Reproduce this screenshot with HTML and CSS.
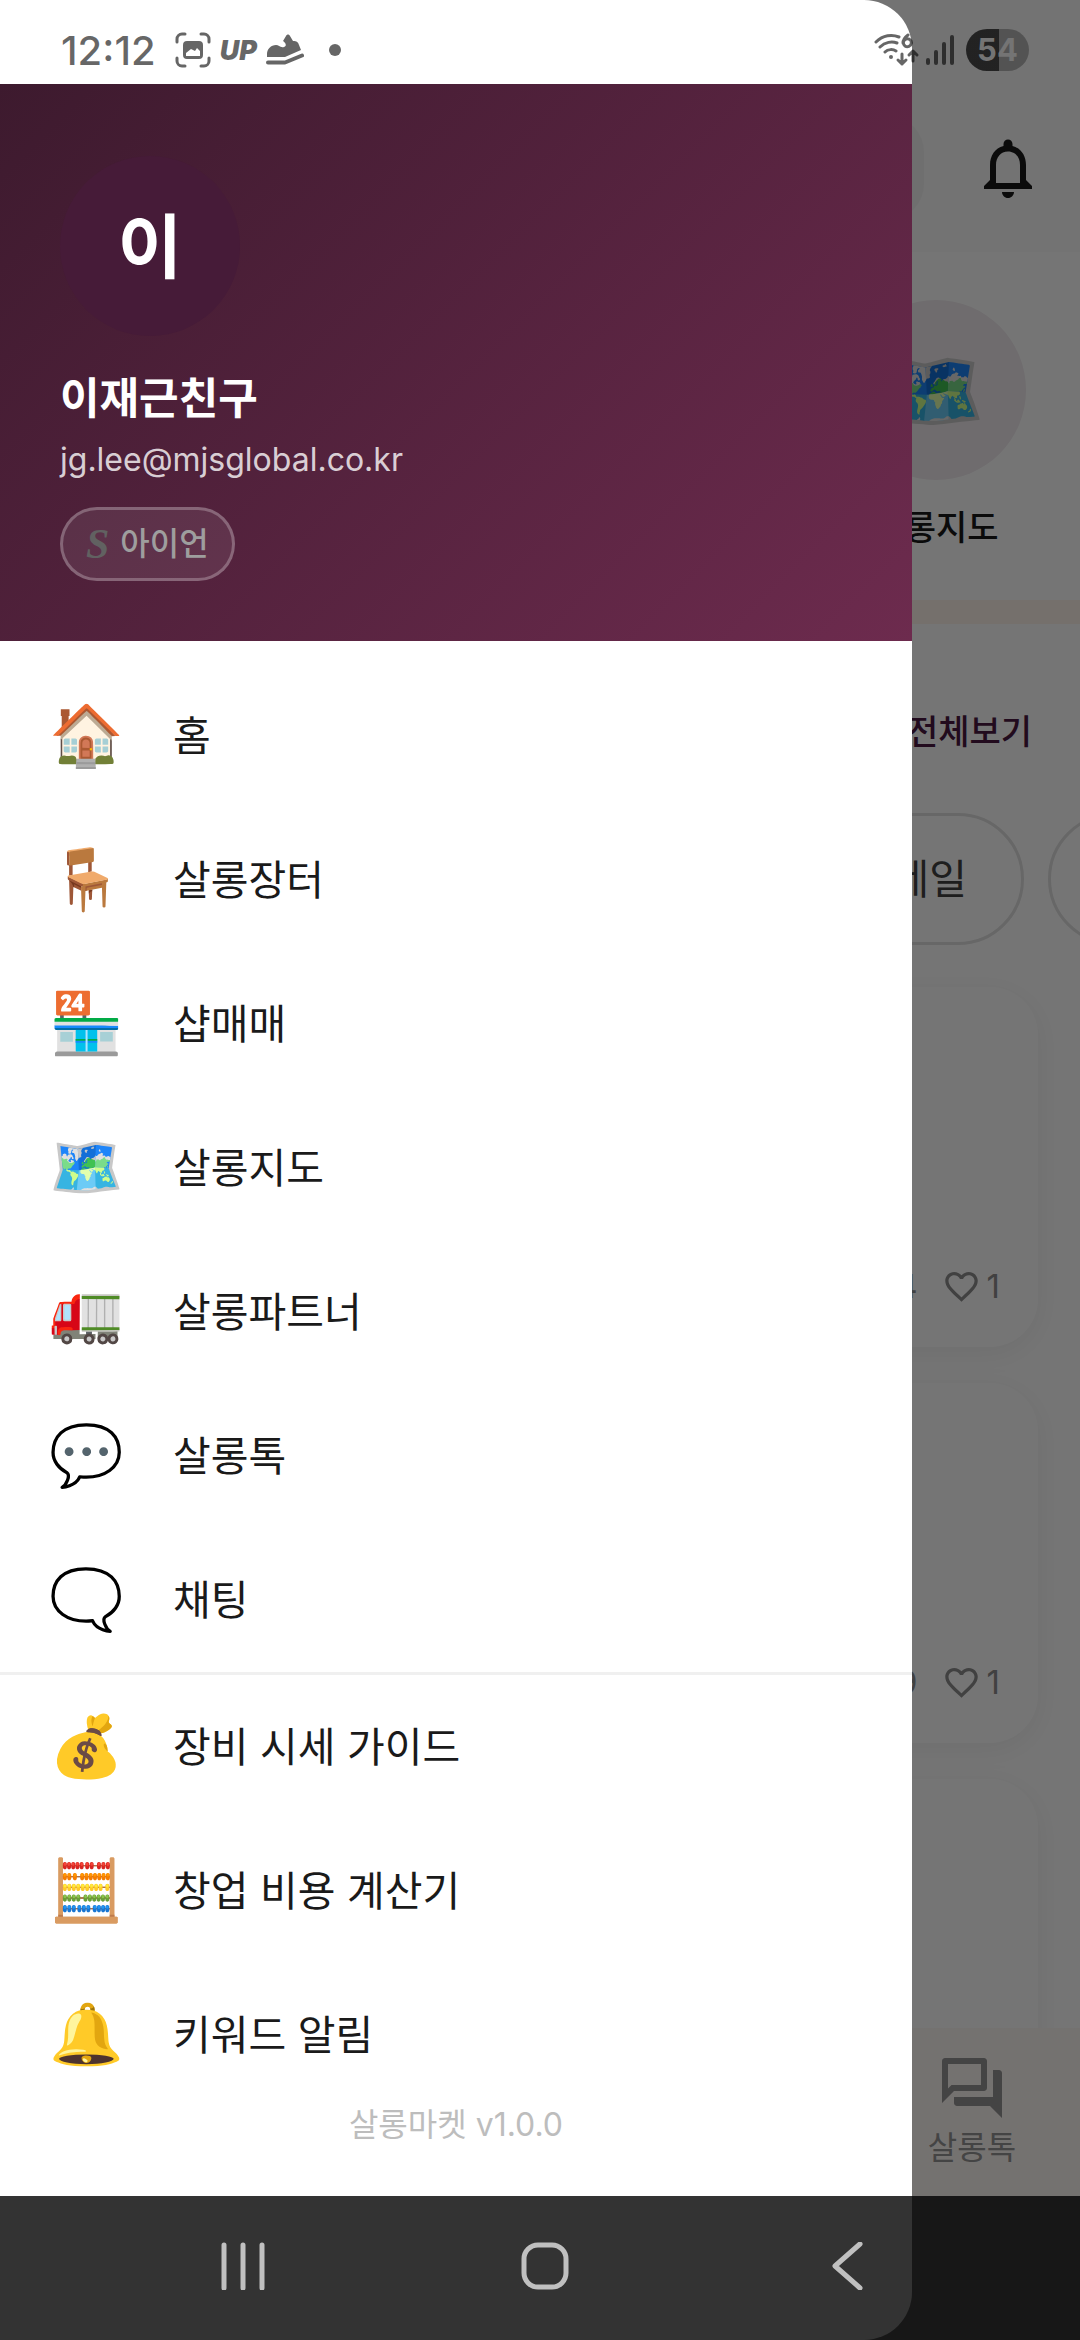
FILE: index.html
```html
<!DOCTYPE html>
<html lang="ko">
<head>
    <meta charset="UTF-8">
    <meta name="viewport" content="width=device-width, initial-scale=1">
    <title>살롱마켓</title>
    <link rel="stylesheet" href="styles.css">
</head>
<body>

    <!-- 앱 화면 -->
    <div class="app">
        <header class="appbar">
            <div class="search"></div>
            <button class="icon-btn" type="button" aria-label="알림">
                <svg viewBox="0 0 24 24" width="72" height="72"><path fill="currentColor" d="M12 22c1.100 0 2-.9 2-2h-4c0 1.100.9 2 2 2zm6-6v-5c0-3.070-1.630-5.640-4.500-6.320V4c0-.83-.67-1.500-1.500-1.500s-1.500.67-1.500 1.500v.68C7.640 5.360 6 7.920 6 11v5l-2 2v1h16v-1l-2-2zm-2 1H8v-6c0-2.480 1.510-4.500 4-4.500s4 2.020 4 4.500v6z"/></svg>
            </button>
        </header>

        <main class="content">
            <section class="shortcuts">
                <a class="shortcut" href="#map">
                    <span class="shortcut-icon">🗺️</span>
                    <span>살롱지도</span>
                </a>
            </section>
            <div class="more"><a href="#all">전체보기</a></div>
            <div class="chips">
                <button class="chip" type="button">네일</button>
                <button class="chip chip-next" type="button" aria-label="다음"></button>
            </div>
            <div class="cards">
                <article class="card">
                    <span>4</span>
                    <svg viewBox="0 0 24 24"><use href="#heart"/></svg>
                    <span>1</span>
                </article>
                <article class="card">
                    <span>9</span>
                    <svg viewBox="0 0 24 24"><use href="#heart"/></svg>
                    <span>1</span>
                </article>
                <article class="card"></article>
            </div>
        </main>

        <nav class="tabbar">
            <a class="tab" href="#talk">
                <svg viewBox="0 0 24 24" width="72" height="72"><path fill="currentColor" d="M15 4v7H5.170L4 12.170V4h11m1-2H3c-.55 0-1 .45-1 1v14l4-4h10c.55 0 1-.45 1-1V3c0-.55-.45-1-1-1zm5 4h-2v9H6v2c0 .55.45 1 1 1h11l4 4V7c0-.55-.45-1-1-1z"/></svg>
                <span>살롱톡</span>
            </a>
        </nav>
    </div>

    <div class="scrim"></div>

    <!-- 사이드 메뉴 -->
    <aside class="drawer">
        <header class="profile">
            <div class="avatar">이</div>
            <h1 class="name">이재근친구</h1>
            <p class="email">jg.lee@mjsglobal.co.kr</p>
            <span class="grade"><i>S</i>아이언</span>
        </header>
        <ul class="menu">
            <li><a href="#home"><span class="ico">🏠</span>홈</a></li>
            <li><a href="#market"><span class="ico">🪑</span>살롱장터</a></li>
            <li><a href="#shop"><span class="ico">🏪</span>샵매매</a></li>
            <li><a href="#map"><span class="ico">🗺️</span>살롱지도</a></li>
            <li><a href="#partner"><span class="ico">🚛</span>살롱파트너</a></li>
            <li><a href="#talk"><span class="ico">💬</span>살롱톡</a></li>
            <li><a href="#chat"><span class="ico">🗨️</span>채팅</a></li>
        </ul>
        <ul class="menu tools">
            <li><a href="#price"><span class="ico">💰</span>장비 시세 가이드</a></li>
            <li><a href="#cost"><span class="ico">🧮</span>창업 비용 계산기</a></li>
            <li><a href="#keyword"><span class="ico">🔔</span>키워드 알림</a></li>
        </ul>
        <p class="version">살롱마켓 v1.0.0</p>
    </aside>

    <!-- 상태 표시줄 -->
    <div class="statusbar">
        <span class="time">12:12</span>
        <svg class="st-shot" viewBox="0 0 36 36" width="36" height="36">
            <path d="M2 10V7a5 5 0 0 1 5-5h3M26 2h3a5 5 0 0 1 5 5v3M34 26v3a5 5 0 0 1-5 5h-3M10 34H7a5 5 0 0 1-5-5v-3" fill="none" stroke="currentColor" stroke-width="3" stroke-linecap="round"/>
            <path fill="currentColor" fill-rule="evenodd" d="M12 9h12a4 4 0 0 1 4 4v10a4 4 0 0 1-4 4H12a4 4 0 0 1-4-4V13a4 4 0 0 1 4-4zm-1 12v3h14v-5l-3-3-2 3-4-2z"/>
        </svg>
        <span class="st-up">UP</span>
        <svg class="st-shoe" viewBox="0 0 38 32" width="38" height="32">
            <path fill="currentColor" d="M1 23v-3c0-5 4-9 9-9 3 0 4 3 8 2 3-1 2-4-1-6l3-5c1-2 3-2 4 0l3 5c4 0 5 1 6 4l2 5-16 7z"/>
            <path d="M2 28.500h17l17-7" fill="none" stroke="currentColor" stroke-width="4" stroke-linejoin="round" stroke-linecap="round"/>
        </svg>
        <span class="st-dot"></span>
        <svg class="st-wifi" viewBox="0 0 46 34" width="46" height="34">
            <g fill="none" stroke="currentColor" stroke-width="3" stroke-linecap="round">
                <path d="M2 9C9 2 18 1 25 4M6 14c5-5 12-6 17-4M11 19c3-3 8-3 11-1"/>
                <path d="M28 21v10m-4-4l4 4 4-4M39 28V18m-4 4l4-4 4 4" stroke-linejoin="round"/>
                <path d="M34 2c-4 3-5 6-5 8M32 6a4 4 0 1 1-1 7 4 4 0 0 1 1-7z"/>
            </g>
            <circle cx="17" cy="24" r="2" fill="currentColor"/>
        </svg>
        <svg class="st-signal" viewBox="0 0 28 30" width="28" height="30">
            <path d="M2 25v3M10 17v11M18 9v19M26 2v26" stroke="currentColor" stroke-width="4" stroke-linecap="round"/>
        </svg>
        <span class="battery">54</span>
    </div>

    <!-- 내비게이션 바 -->
    <div class="navbar">
        <button type="button" aria-label="최근 앱">
            <svg viewBox="0 0 48 48"><path d="M5 3v43M24 3v43M43 3v43"/></svg>
        </button>
        <button type="button" aria-label="홈">
            <svg viewBox="0 0 48 48"><rect x="3" y="3" width="42" height="42" rx="14"/></svg>
        </button>
        <button type="button" aria-label="뒤로">
            <svg viewBox="0 0 48 48"><path d="M36 2L11 24l25 22"/></svg>
        </button>
    </div>

    <svg width="0" height="0" class="defs">
        <symbol id="heart" viewBox="0 0 24 24"><path fill="currentColor" d="M16.500 3c-1.740 0-3.410.81-4.500 2.090C10.910 3.810 9.240 3 7.500 3 4.420 3 2 5.420 2 8.500c0 3.780 3.400 6.860 8.550 11.540L12 21.350l1.450-1.320C18.600 15.360 22 12.280 22 8.500 22 5.420 19.580 3 16.500 3zm-4.400 15.550l-.1.100-.1-.1C7.140 14.240 4 11.390 4 8.500 4 6.500 5.500 5 7.500 5c1.540 0 3.040.99 3.570 2.360h1.870C13.460 5.990 14.960 5 16.500 5c2 0 3.500 1.500 3.500 3.500 0 2.890-3.140 5.740-7.900 10.050z"/></symbol>
    </svg>

</body>
</html>
```

FILE: styles.css
```css
html,body,ul,li,h1,p{
    margin: 0;
    padding: 0;
}

ul,li{
    list-style: none;
}

*{
    box-sizing: border-box;
}

body{
    position: relative;
    height: 100vh;
    overflow: hidden;
    font-family: Inter, "Noto Sans CJK KR", sans-serif;
    color: #1a1a1a;
    background-color: #fff;
}

a{
    color: inherit;
    text-decoration: none;
}

button{
    padding: 0;
    border: 0;
    background: none;
    font: inherit;
    color: inherit;
}

svg{
    display: block;
}

.defs{
    position: absolute;
}

/* app */
.app{
    display: flex;
    flex-direction: column;
    height: 100%;
    padding-bottom: 144px;
}

.appbar{
    display: flex;
    align-items: center;
    gap: 48px;
    height: 252px;
    padding: 84px 36px 0 48px;
    background-color: #fafafa;
}

.search{
    flex: 1;
    height: 104px;
    border-radius: 36px;
    background-color: #f2f2f2;
}

.content{
    flex: 1;
    min-height: 0;
    overflow: hidden;
}

.shortcuts{
    display: flex;
    justify-content: flex-end;
    height: 372px;
    padding: 48px 54px 0;
    border-bottom: 24px solid #fef3eb;
}

.shortcut{
    display: flex;
    flex-direction: column;
    align-items: center;
    gap: 24px;
    font-size: 34px;
    font-weight: 500;
    line-height: 48px;
}

.shortcut-icon{
    width: 180px;
    height: 180px;
    border-radius: 50%;
    background-color: #f1ebef;
    font-size: 78px;
    line-height: 180px;
    text-align: center;
}

.more{
    padding: 84px 48px 0;
    font-size: 34px;
    font-weight: 500;
    line-height: 48px;
    text-align: right;
    color: #4a1942;
}

.chips{
    display: flex;
    justify-content: flex-end;
    gap: 24px;
    margin: 57px -84px 0 0;
}

.chip{
    height: 132px;
    padding: 0 54px;
    border: 3px solid #e0e0e0;
    border-radius: 66px;
    font-size: 41px;
    line-height: 48px;
    color: #424242;
}

.chip-next{
    width: 132px;
    margin-right: -16px;
}

.cards{
    display: flex;
    flex-direction: column;
    gap: 36px;
    padding: 42px;
}

.card{
    display: flex;
    flex: none;
    align-items: flex-end;
    justify-content: flex-end;
    height: 360px;
    padding: 41px 38px;
    border-radius: 48px;
    box-shadow: 0 6px 30px rgba(0,0,0,.06);
    font-size: 33px;
    line-height: 40px;
    color: #8e8e8e;
}

.card svg{
    width: 39px;
    height: 39px;
    margin: 0 6px 0 24px;
}

.tabbar{
    display: flex;
    justify-content: flex-end;
    height: 168px;
    background-color: #fdf8f5;
}

.tab{
    display: flex;
    flex-direction: column;
    align-items: center;
    width: 20%;
    padding-top: 24px;
    font-size: 32px;
    line-height: 48px;
    color: #959595;
}

.scrim{
    position: absolute;
    inset: 0;
    background-color: rgba(0,0,0,.54);
}

/* drawer */
.drawer{
    position: absolute;
    top: 0;
    bottom: 0;
    left: 0;
    width: 912px;
    max-width: 90%;
    padding-top: 84px;
    border-radius: 0 48px 48px 0;
    overflow: hidden;
    background-color: #fff;
}

.profile{
    padding: 72px 60px 60px;
    color: #fff;
    background: linear-gradient(135deg, #3d1a2e, #6d2b4e);
}

.avatar{
    width: 180px;
    height: 180px;
    border-radius: 50%;
    background-color: #461b38;
    font-size: 70px;
    font-weight: 700;
    line-height: 184px;
    text-align: center;
}

.name{
    margin-top: 32px;
    font-size: 43px;
    line-height: 60px;
}

.email{
    margin-top: 8px;
    font-size: 32px;
    line-height: 48px;
    color: rgba(255,255,255,.8);
}

.grade{
    display: inline-flex;
    align-items: center;
    gap: 11px;
    height: 74px;
    margin-top: 23px;
    padding: 0 23px;
    border: 3px solid rgba(255,255,255,.25);
    border-radius: 37px;
    background-color: rgba(255,255,255,.08);
    font-size: 32px;
    font-weight: 500;
    line-height: 48px;
    vertical-align: top;
    color: #9e9e9e;
}

.grade i{
    font-family: "Liberation Serif", serif;
    font-size: 42px;
    font-weight: 700;
    color: #616161;
}

.menu{
    padding-top: 23px;
}

.tools{
    padding-top: 0;
    border-top: 3px solid #f0f0f0;
}

.menu a{
    display: flex;
    align-items: center;
    gap: 49px;
    height: 144px;
    padding: 0 48px;
    font-size: 41px;
    line-height: 48px;
}

.ico{
    width: 76px;
    font-family: Roboto, sans-serif;
    font-size: 60px;
    line-height: 76px;
    text-align: center;
}

.version{
    font-size: 32px;
    line-height: 36px;
    text-align: center;
    color: #bdbdbd;
}

/* system bars */
.statusbar{
    position: absolute;
    top: 0;
    left: 0;
    right: 0;
    display: flex;
    align-items: center;
    height: 100px;
    padding: 0 51px 0 61px;
    color: rgba(0,0,0,.6);
}

.time{
    font-size: 40px;
    font-weight: 500;
}

.st-shot{
    margin-left: 19px;
}

.st-up{
    margin-left: 9px;
    font-size: 27px;
    font-style: italic;
    font-weight: 900;
}

.st-shoe{
    margin-left: 9px;
}

.st-dot{
    width: 12px;
    height: 12px;
    margin-left: 25px;
    border-radius: 50%;
    background-color: currentColor;
}

.st-wifi{
    margin-left: auto;
}

.st-signal{
    margin-left: 6px;
}

.battery{
    width: 63px;
    height: 42px;
    margin-left: 12px;
    border-radius: 21px;
    background: linear-gradient(90deg, rgba(0,0,0,.7) 52%, rgba(0,0,0,.28) 52%);
    font-size: 31px;
    font-weight: 700;
    line-height: 42px;
    text-align: center;
    color: #747474;
}

.navbar{
    position: absolute;
    left: 0;
    right: 0;
    bottom: 0;
    display: flex;
    height: 144px;
    padding: 0 81px 4px 92px;
    background-color: rgba(0,0,0,.8);
}

.navbar button{
    display: flex;
    flex: 1;
    align-items: center;
    justify-content: center;
}

.navbar svg{
    width: 48px;
    height: 48px;
    fill: none;
    stroke: #c0c0c0;
    stroke-width: 5;
    stroke-linecap: round;
    stroke-linejoin: round;
}
```
